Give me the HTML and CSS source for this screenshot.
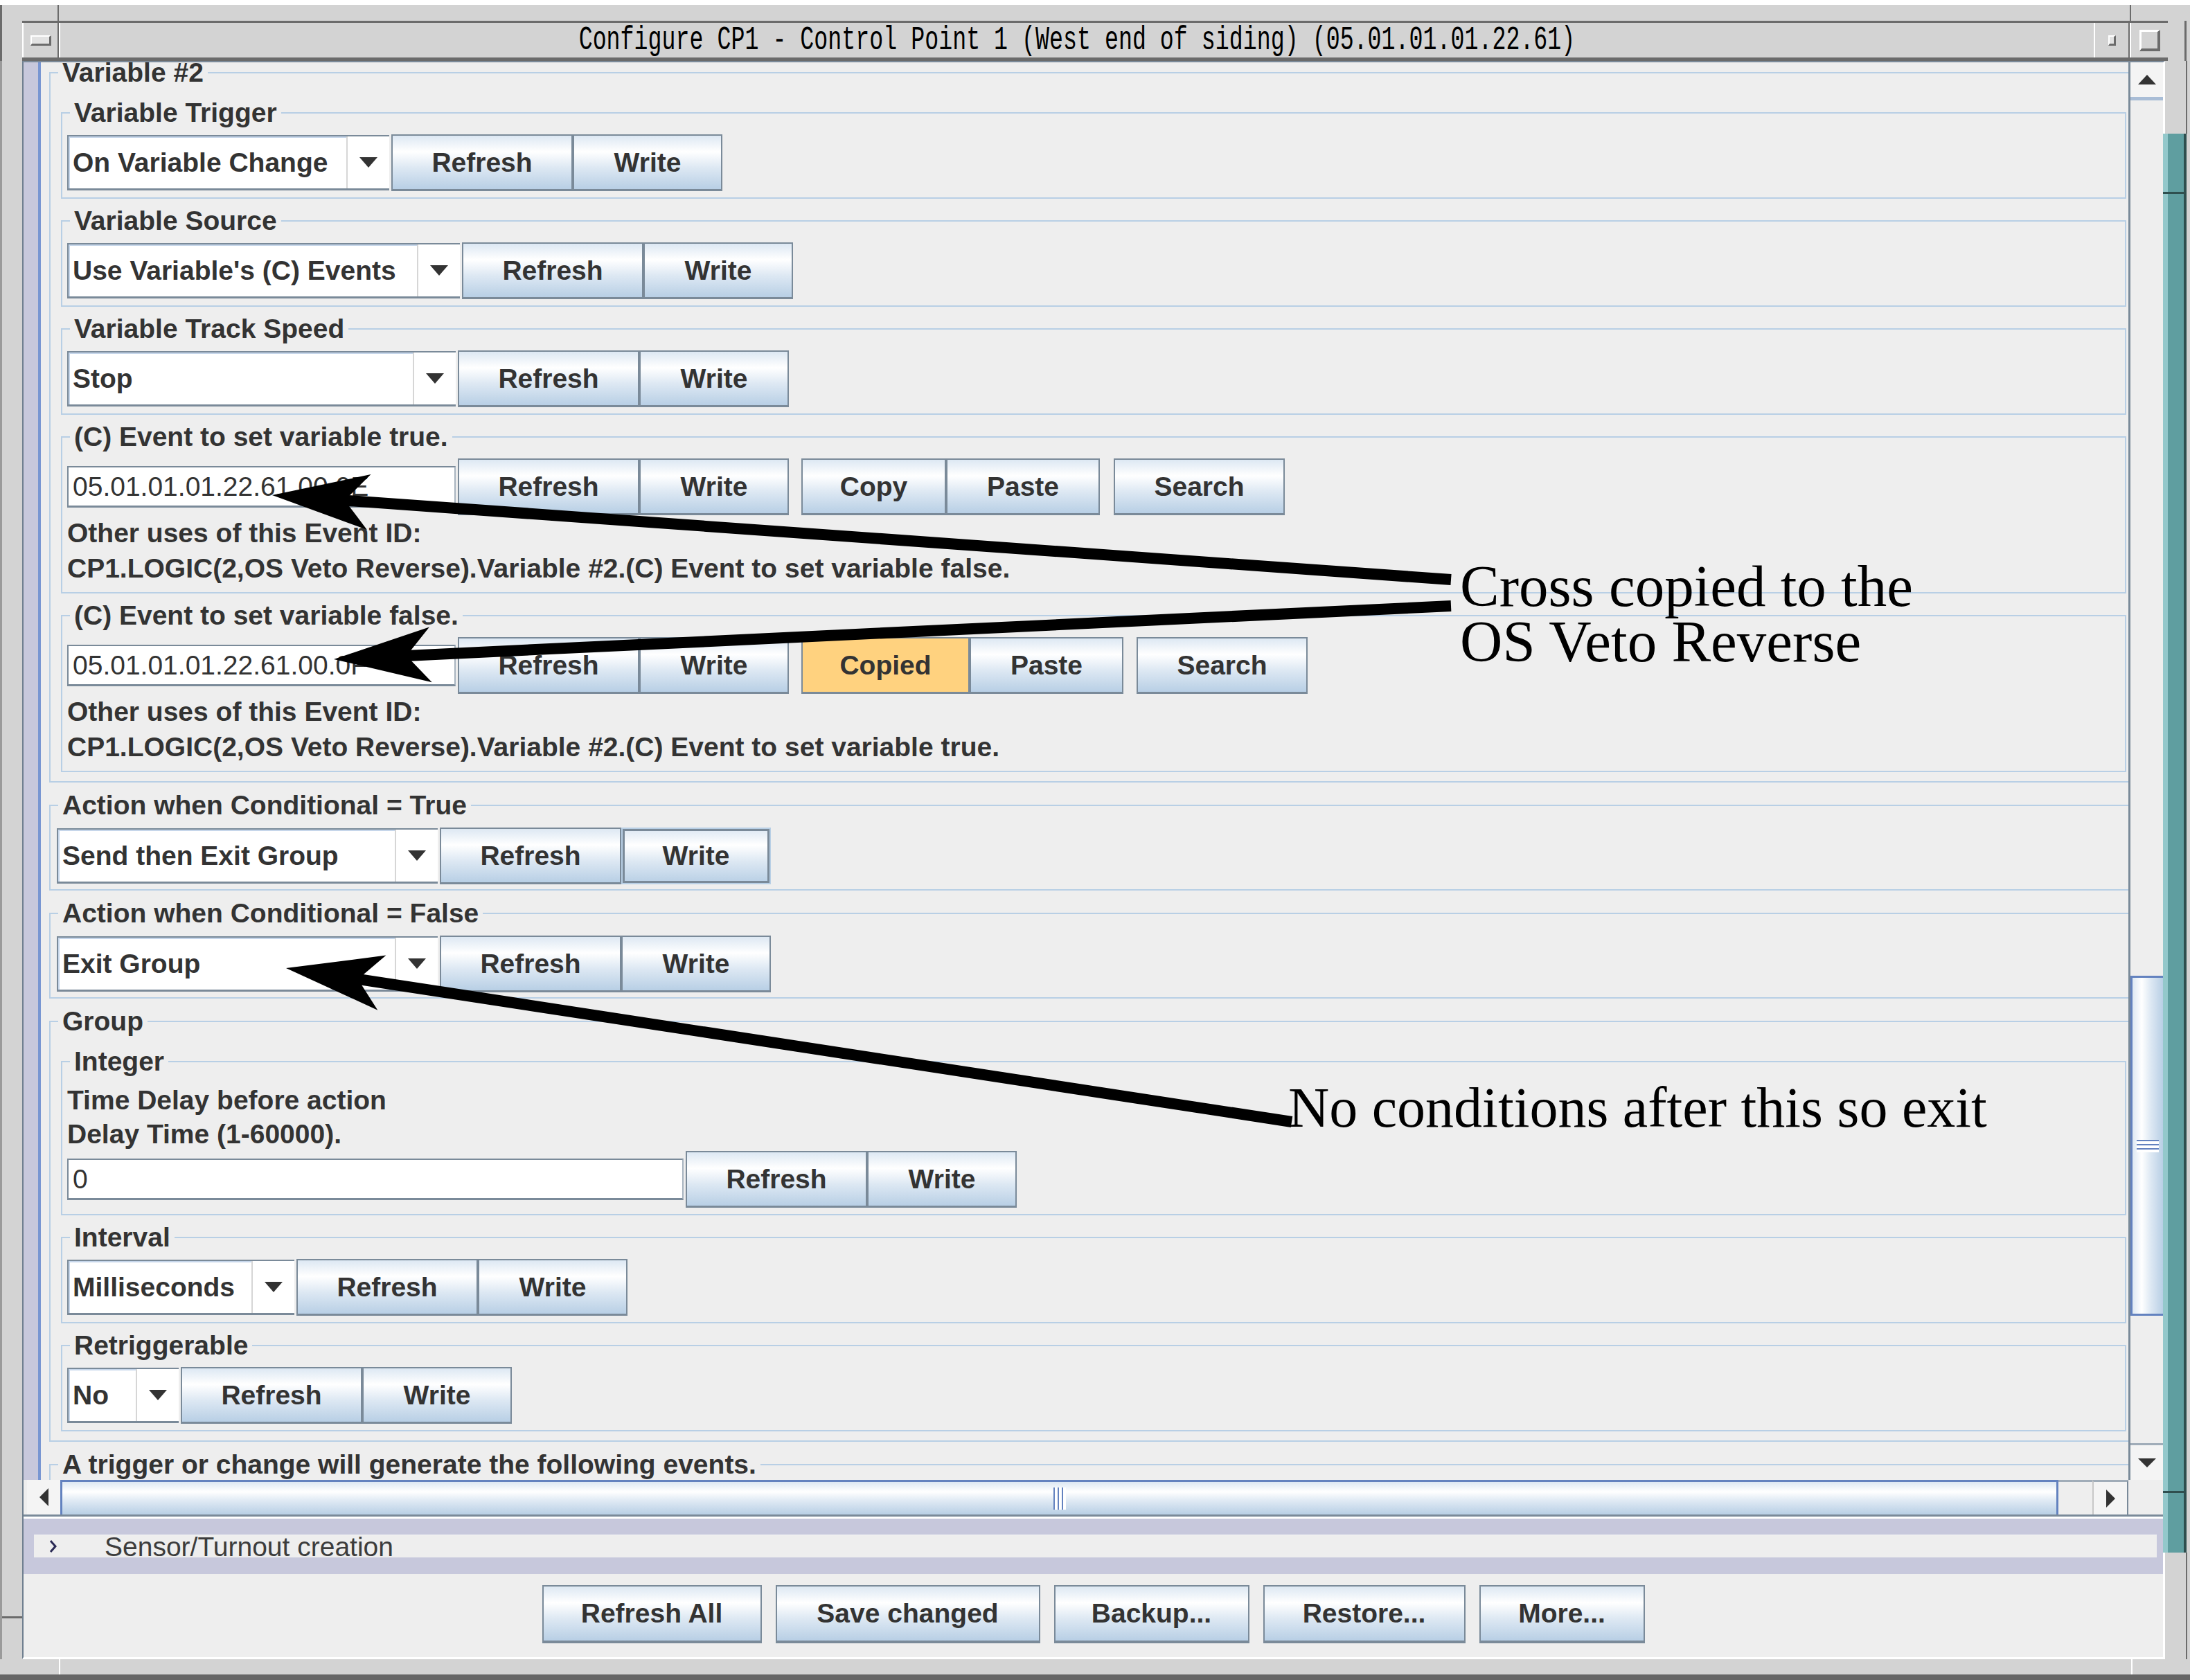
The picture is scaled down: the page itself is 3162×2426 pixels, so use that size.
FILE: index.html
```html
<!DOCTYPE html>
<html>
<head>
<meta charset="utf-8">
<title>Configure CP1</title>
<link rel="stylesheet" href="styles.css">
</head>
<body>
<div class="screen">
  <div class="wm-top">
    <div class="wm-top-left"></div>
    <div class="wm-top-mid"></div>
    <div class="wm-top-right"></div>
  </div>
  <div class="title-row">
    <div class="frame-l"></div>
    <div class="titlebar">
      <div class="tb-menu"><span class="tb-minus"></span></div>
      <div class="tb-title"><span class="tb-text">Configure CP1 - Control Point 1 (West end of siding) (05.01.01.01.22.61)</span></div>
      <div class="tb-iconify"><span class="tb-dot"></span></div>
      <div class="tb-max"><span class="tb-square"></span></div>
    </div>
    <div class="frame-r"></div>
  </div>
  <div class="main-row">
    <div class="frame-l2"><div class="frame-l2-top"></div></div>
    <div class="win">
      <div class="scrollpane">
        <div class="sp-row">
          <div class="viewport">
            <div class="vp-side"></div>
            <div class="vp-line"></div>
            <div class="vp-content">

              <fieldset class="tb outer first">
                <legend>Variable #2</legend>
                <div class="ob ob-first">
                  <fieldset class="tb inner">
                    <legend>Variable Trigger</legend>
                    <div class="ib">
                      <div class="row">
                        <div class="combo w-vt"><span class="combo-text">On Variable Change</span><span class="combo-arrow"><i class="tri"></i></span></div>
                        <div class="btn b-refresh">Refresh</div><div class="btn b-write">Write</div>
                      </div>
                    </div>
                  </fieldset>
                  <fieldset class="tb inner">
                    <legend>Variable Source</legend>
                    <div class="ib">
                      <div class="row">
                        <div class="combo w-vs"><span class="combo-text">Use Variable's (C) Events</span><span class="combo-arrow"><i class="tri"></i></span></div>
                        <div class="btn b-refresh">Refresh</div><div class="btn b-write">Write</div>
                      </div>
                    </div>
                  </fieldset>
                  <fieldset class="tb inner">
                    <legend>Variable Track Speed</legend>
                    <div class="ib">
                      <div class="row">
                        <div class="combo w-vts"><span class="combo-text">Stop</span><span class="combo-arrow"><i class="tri"></i></span></div>
                        <div class="btn b-refresh">Refresh</div><div class="btn b-write">Write</div>
                      </div>
                    </div>
                  </fieldset>
                  <fieldset class="tb inner">
                    <legend>(C) Event to set variable true.</legend>
                    <div class="ib">
                      <div class="row">
                        <div class="tfield w-ev">05.01.01.01.22.61.00.0E</div>
                        <div class="btn b-refresh">Refresh</div><div class="btn b-write">Write</div>
                        <div class="btn b-copy sep18">Copy</div><div class="btn b-paste">Paste</div>
                        <div class="btn b-search sep20">Search</div>
                      </div>
                      <div class="info">Other uses of this Event ID:</div>
                      <div class="info">CP1.LOGIC(2,OS Veto Reverse).Variable #2.(C) Event to set variable false.</div>
                    </div>
                  </fieldset>
                  <fieldset class="tb inner">
                    <legend>(C) Event to set variable false.</legend>
                    <div class="ib">
                      <div class="row">
                        <div class="tfield w-ev">05.01.01.01.22.61.00.0F</div>
                        <div class="btn b-refresh">Refresh</div><div class="btn b-write">Write</div>
                        <div class="btn b-copied sep18">Copied</div><div class="btn b-paste">Paste</div>
                        <div class="btn b-search sep19">Search</div>
                      </div>
                      <div class="info">Other uses of this Event ID:</div>
                      <div class="info">CP1.LOGIC(2,OS Veto Reverse).Variable #2.(C) Event to set variable true.</div>
                    </div>
                  </fieldset>
                </div>
              </fieldset>

              <fieldset class="tb outer">
                <legend>Action when Conditional = True</legend>
                <div class="ob-d">
                  <div class="row">
                    <div class="combo w-act"><span class="combo-text">Send then Exit Group</span><span class="combo-arrow"><i class="tri"></i></span></div>
                    <div class="btn b-refresh">Refresh</div><div class="btn b-write focus">Write</div>
                  </div>
                </div>
              </fieldset>

              <fieldset class="tb outer">
                <legend>Action when Conditional = False</legend>
                <div class="ob-d">
                  <div class="row">
                    <div class="combo w-act"><span class="combo-text">Exit Group</span><span class="combo-arrow"><i class="tri"></i></span></div>
                    <div class="btn b-refresh">Refresh</div><div class="btn b-write">Write</div>
                  </div>
                </div>
              </fieldset>

              <fieldset class="tb outer">
                <legend>Group</legend>
                <div class="ob">
                  <fieldset class="tb inner">
                    <legend>Integer</legend>
                    <div class="ib">
                      <div class="plain">Time Delay before action</div>
                      <div class="plain">Delay Time (1-60000).</div>
                      <div class="row">
                        <div class="tfield w-int">0</div>
                        <div class="btn b-refresh">Refresh</div><div class="btn b-write">Write</div>
                      </div>
                    </div>
                  </fieldset>
                  <fieldset class="tb inner">
                    <legend>Interval</legend>
                    <div class="ib">
                      <div class="row">
                        <div class="combo w-ms"><span class="combo-text">Milliseconds</span><span class="combo-arrow"><i class="tri"></i></span></div>
                        <div class="btn b-refresh">Refresh</div><div class="btn b-write">Write</div>
                      </div>
                    </div>
                  </fieldset>
                  <fieldset class="tb inner">
                    <legend>Retriggerable</legend>
                    <div class="ib">
                      <div class="row">
                        <div class="combo w-no"><span class="combo-text">No</span><span class="combo-arrow"><i class="tri"></i></span></div>
                        <div class="btn b-refresh">Refresh</div><div class="btn b-write">Write</div>
                      </div>
                    </div>
                  </fieldset>
                </div>
              </fieldset>

              <fieldset class="tb outer">
                <legend>A trigger or change will generate the following events.</legend>
                <div class="ob-rest"></div>
              </fieldset>

            </div>
          </div>
          <div class="vscroll">
            <div class="sb-up"><i class="tri-up"></i></div>
            <div class="vs-track1"></div>
            <div class="vs-thumb"><span class="vgrip"></span></div>
            <div class="vs-track2"></div>
            <div class="sb-down"><i class="tri-sm"></i></div>
          </div>
        </div>
        <div class="hscroll-row">
          <div class="hscroll">
            <div class="sb-left"><i class="tri-left"></i></div>
            <div class="hs-thumb"><span class="hgrip"></span></div>
            <div class="hs-track"></div>
            <div class="sb-right"><i class="tri-right"></i></div>
          </div>
          <div class="corner"></div>
        </div>
      </div>
      <div class="lav-band">
        <div class="collapse-row">
          <svg class="chev" width="12" height="20" viewBox="0 0 12 20"><polyline points="2,2 9,10 2,18" fill="none" stroke="#2a2a55" stroke-width="3"/></svg>
          <span class="collapse-text">Sensor/Turnout creation</span>
        </div>
      </div>
      <div class="bottom-buttons">
        <div class="btn bb b-all">Refresh All</div>
        <div class="btn bb b-save">Save changed</div>
        <div class="btn bb b-backup">Backup...</div>
        <div class="btn bb b-restore">Restore...</div>
        <div class="btn bb b-more">More...</div>
      </div>
    </div>
    <div class="frame-r2"></div>
  </div>
  <div class="wm-bottom">
    <div class="wm-bot-left"></div>
    <div class="wm-bot-mid"></div>
    <div class="wm-bot-right"></div>
  </div>

  <div class="teal"></div>

  <svg class="annot" width="3162" height="2426" viewBox="0 0 3162 2426">
    <line x1="492.7" y1="722.2" x2="2095" y2="837" stroke="#000" stroke-width="16"/>
    <polygon points="393,715 529.8,764.9 497.7,722.5 535.5,685.1" fill="#000"/>
    <line x1="581.9" y1="947.2" x2="2095" y2="875" stroke="#000" stroke-width="16"/>
    <polygon points="482,952 623.7,985.3 586.9,947 619.9,905.4" fill="#000"/>
    <line x1="511.9" y1="1413.1" x2="1865" y2="1620" stroke="#000" stroke-width="16"/>
    <polygon points="413,1398 545.3,1458.7 516.8,1413.9 557.4,1379.6" fill="#000"/>
  </svg>
  <div class="note note1a">Cross copied to the</div>
  <div class="note note1b">OS Veto Reverse</div>
  <div class="note note2">No conditions after this so exit</div>
</div>
</body>
</html>
```
FILE: styles.css
```css
* { box-sizing: border-box; }
html, body { margin: 0; padding: 0; }
body {
  width: 3162px;
  height: 2426px;
  overflow: hidden;
  background: #d3d3d3;
  font-family: "Liberation Sans", Arial, sans-serif;
}
.screen {
  position: relative;
  width: 3162px;
  height: 2426px;
  background: #d3d3d3;
  overflow: hidden;
}

/* ---------- window manager frame ---------- */
.wm-top { display: flex; height: 30px; border-top: 7px solid #fff; }
.wm-top-left { width: 85px; border-left: 3px solid #6b6b6b; border-right: 2px solid #6b6b6b; }
.wm-top-mid { flex: 1; }
.wm-top-right { width: 87px; border-left: 2px solid #6b6b6b; }

.title-row { display: flex; height: 58px; }
.frame-l { width: 32px; flex: none; border-left: 3px solid #6b6b6b; }
.titlebar {
  width: 3098px;
  flex: none;
  display: flex;
  background: #d3d3d3;
  border-top: 3px solid #6b6b6b;
  border-bottom: 5px solid #6b6b6b;
}
.tb-menu {
  width: 53px;
  flex: none;
  border-left: 2px solid #fff;
  border-right: 2px solid #6b6b6b;
  display: flex; align-items: center; justify-content: center;
}
.tb-minus {
  width: 30px; height: 15px;
  background: #e2e2e2;
  border-top: 2px solid #fff; border-left: 2px solid #fff;
  border-bottom: 3px solid #6b6b6b; border-right: 3px solid #6b6b6b;
}
.tb-title {
  flex: 1;
  min-width: 0;
  display: flex; align-items: center; justify-content: center;
  border-left: 2px solid #fff;
}
.tb-text {
  display: inline-block;
  font-family: "Liberation Mono", "DejaVu Sans Mono", monospace;
  font-size: 33.3px;
  line-height: 34px;
  color: #000;
  white-space: pre;
  transform: scaleY(1.45);
}
.tb-iconify {
  width: 52px;
  flex: none;
  border-left: 2px solid #fff;
  border-right: 2px solid #6b6b6b;
  display: flex; align-items: center; justify-content: center;
}
.tb-dot {
  width: 11px; height: 15px;
  background: #e2e2e2;
  border-top: 2px solid #fff; border-left: 2px solid #fff;
  border-right: 3px solid #6b6b6b; border-bottom: 3px solid #6b6b6b;
}
.tb-max {
  width: 55px;
  flex: none;
  border-left: 2px solid #fff;
  display: flex; align-items: center; justify-content: center;
}
.tb-square {
  width: 30px; height: 31px;
  background: #d3d3d3;
  border-top: 3px solid #fff; border-left: 3px solid #fff;
  border-right: 4px solid #6b6b6b; border-bottom: 4px solid #6b6b6b;
}
.frame-r { flex: 1; background: linear-gradient(to right, #d3d3d3 0 24px, #6b6b6b 24px 27px, #d3d3d3 27px); }

.main-row { display: flex; height: 2308px; }
.frame-l2 { width: 32px; flex: none; border-left: 3px solid #9a9a9a; }
.frame-l2-top { height: 2249px; border-bottom: 3px solid #6b6b6b; }
.frame-r2 {
  flex: 1;
  background: linear-gradient(to right, #d3d3d3 0 30px, #6b6b6b 30px 32px, #d3d3d3 32px);
}
.wm-bottom { display: flex; height: 30px; border-bottom: 8px solid #666; }
.wm-bot-left { width: 87px; border-right: 2px solid #fff; }
.wm-bot-mid { flex: 1; }
.wm-bot-right { width: 85px; border-left: 2px solid #fff; }

.teal {
  position: absolute;
  left: 3123px; top: 193px;
  width: 39px; height: 2049px;
  background: linear-gradient(to right, #93c8cb 0 7px, #5f9ea0 7px 30px, #2f4f4f 30px 34px, #d3d3d3 34px);
}
.teal::before, .teal::after {
  content: "";
  position: absolute;
  left: 0; width: 34px; height: 3px;
  background: #2f4f4f;
}
.teal::before { top: 84px; }
.teal::after { top: 1960px; }

/* ---------- window ---------- */
.win {
  width: 3094px;
  flex: none;
  display: flex;
  flex-direction: column;
  background: #eeeeee;
  border-top: 2px solid #7b8a99;
  border-left: 2px solid #6f7f8f;
  border-right: 3px solid #fff;
  border-bottom: 3px solid #fff;
}
.scrollpane { border-bottom: 3px solid #fff; }
.sp-row { display: flex; height: 2047px; }
.viewport {
  width: 3039px;
  height: 2047px;
  overflow: hidden;
  display: flex;
  background: #eeeeee;
}
.vp-side { flex: none; width: 21px; background: #c7c8dc; }
.vp-line { flex: none; width: 4px; background: #7896d2; }
.vp-content {
  flex: none;
  width: 3040px;
  padding-left: 12px;
  display: flex;
  flex-direction: column;
  gap: 10px;
}

/* titled borders */
.tb {
  border: 2px solid #b8cfe5;
  margin: 0;
  padding: 0;
  min-width: 0;
}
.tb > legend {
  margin-left: 11px;
  padding: 0 6px;
  font-weight: bold;
  font-size: 39px;
  line-height: 46px;
  color: #333;
  white-space: nowrap;
}
.tb.first > legend { line-height: 30px; }
.outer { width: 3016px; flex: none; }
.inner { margin: 0 6px; }
.ob { padding: 12px 9px 13px; display: flex; flex-direction: column; gap: 9px; }
.ob.ob-first { padding-top: 20px; }
.ob-d { padding: 9px 9px 7px; }
.ob-rest { height: 300px; }
.ib { padding: 8px 7px 9px; }

.row { display: flex; align-items: center; height: 82px; }
.info {
  font-weight: bold; font-size: 39px; line-height: 51px;
  color: #333; white-space: nowrap;
}
.plain {
  font-weight: bold; font-size: 39px; line-height: 49px;
  color: #333; white-space: nowrap;
}

/* combo */
.combo {
  flex: none;
  display: flex;
  height: 80px;
  margin-right: 3px;
  background: #fff;
  border: 2px solid #7a8a99;
  border-right: 0;
  border-bottom-width: 3px;
}
.combo-text {
  flex: 1;
  display: flex; align-items: center;
  padding-left: 6px;
  font-weight: bold; font-size: 39px;
  color: #333;
  white-space: nowrap; overflow: hidden;
  box-shadow: inset 2px 2px 0 #c6d6ea;
}
.combo-arrow {
  flex: none;
  width: 62px;
  display: flex; align-items: center; justify-content: center;
  border-left: 2px solid #d6d6d6;
}
.tri {
  width: 0; height: 0;
  border-left: 13px solid transparent;
  border-right: 13px solid transparent;
  border-top: 15px solid #333;
}
.w-vt { width: 465px; }
.w-vs { width: 567px; }
.w-vts { width: 561px; }
.w-act { width: 550px; }
.w-ms { width: 328px; }
.w-no { width: 161px; }

/* text field */
.tfield {
  flex: none;
  height: 60px;
  margin-right: 3px;
  display: flex; align-items: center;
  padding-left: 6px;
  background: #fff;
  border: 2px solid #7a8a99;
  border-right-color: #a8b4c0;
  border-bottom-width: 3px;
  font-size: 39px;
  color: #333;
  white-space: nowrap; overflow: hidden;
}
.w-ev { width: 561px; }
.w-int { width: 890px; }

/* buttons */
.btn {
  flex: none;
  height: 82px;
  display: flex; align-items: center; justify-content: center;
  border: 2px solid #7a8a99;
  border-bottom-width: 3px;
  background: linear-gradient(to bottom, #dde8f3 0%, #ffffff 30%, #dde8f3 60%, #b8cfe5 100%);
  font-weight: bold; font-size: 39px;
  color: #333;
  white-space: nowrap;
}
.b-refresh { width: 262px; }
.b-write { width: 216px; }
.b-copy { width: 209px; }
.b-paste { width: 222px; }
.b-search { width: 247px; }
.b-copied { width: 243px; background: #ffd27f; }
.sep18 { margin-left: 18px; }
.sep19 { margin-left: 19px; }
.sep20 { margin-left: 20px; }
.btn.focus {
  border: 2px solid #b8cfe5;
  box-shadow: inset 0 0 0 3px #7a8a99;
}

/* vertical scrollbar */
.vscroll {
  width: 50px;
  flex: none;
  display: flex; flex-direction: column;
  border-left: 3px solid #7a8a99;
  background: #eeeeee;
}
.sb-up {
  height: 55px;
  flex: none;
  display: flex; align-items: center; justify-content: center;
  background: #f4f4f4;
  border-bottom: 5px solid #a9bdd6;
}
.tri-up {
  width: 0; height: 0;
  border-left: 13px solid transparent;
  border-right: 13px solid transparent;
  border-bottom: 14px solid #333;
}
.vs-track1 { height: 1264px; flex: none; }
.vs-thumb {
  height: 491px;
  flex: none;
  display: flex; align-items: center; justify-content: center;
  border-top: 3px solid #6382bf;
  border-bottom: 3px solid #6382bf;
  border-left: 3px solid #6382bf;
  background: linear-gradient(to right, #dde8f3 0%, #ffffff 30%, #dde8f3 60%, #b8cfe5 100%);
}
.vgrip {
  width: 32px; height: 18px;
  background: repeating-linear-gradient(to bottom, #6382bf 0 2px, #ffffff 2px 6px);
}
.vs-track2 { height: 184px; flex: none; }
.sb-down {
  height: 53px;
  flex: none;
  display: flex; align-items: center; justify-content: center;
  background: #f4f4f4;
  border-top: 3px solid #a0acb8;
}
.tri-sm {
  width: 0; height: 0;
  border-left: 13px solid transparent;
  border-right: 13px solid transparent;
  border-top: 13px solid #333;
}

/* horizontal scrollbar */
.hscroll-row { display: flex; height: 53px; border-bottom: 3px solid #7a8a99; }
.hscroll { width: 3039px; flex: none; display: flex; }
.sb-left {
  width: 53px;
  flex: none;
  display: flex; align-items: center; justify-content: center;
  background: #f4f4f4;
  border-left: 5px solid #eeeeee;
}
.tri-left {
  width: 0; height: 0;
  border-top: 13px solid transparent;
  border-bottom: 13px solid transparent;
  border-right: 13px solid #333;
}
.hs-thumb {
  width: 2885px;
  flex: none;
  display: flex; align-items: center; justify-content: center;
  border-top: 3px solid #6382bf;
  border-left: 3px solid #6382bf;
  border-right: 3px solid #6382bf;
  background: linear-gradient(to bottom, #dde8f3 0%, #ffffff 30%, #dde8f3 60%, #b8cfe5 100%);
}
.hgrip {
  width: 18px; height: 32px;
  background: repeating-linear-gradient(to right, #6382bf 0 2px, #ffffff 2px 6px);
}
.hs-track { width: 49px; flex: none; background: #eeeeee; border-top: 3px solid #a0acb8; }
.sb-right {
  width: 52px;
  flex: none;
  display: flex; align-items: center; justify-content: center;
  background: #f4f4f4;
  border-top: 3px solid #a0acb8;
  border-left: 2px solid #c8c8c8;
  border-right: 2px solid #7a8a99;
}
.tri-right {
  width: 0; height: 0;
  border-top: 13px solid transparent;
  border-bottom: 13px solid transparent;
  border-left: 13px solid #333;
}
.corner { flex: 1; background: #eeeeee; }

/* lavender collapsible band */
.lav-band {
  height: 80px;
  padding: 23px 9px 24px 15px;
  background: #c7c8dc;
}
.collapse-row {
  height: 33px;
  display: flex; align-items: center;
  background: #eeeeee;
  border-top: 1px solid #f6f6f6;
}
.chev { margin-left: 22px; flex: none; }
.collapse-text {
  margin-left: 68px;
  font-size: 39px;
  color: #3c3c3c;
  white-space: nowrap;
  line-height: 33px;
}

/* bottom buttons */
.bottom-buttons {
  height: 120px;
  padding-top: 16px;
  display: flex;
  justify-content: center;
  align-items: flex-start;
  gap: 20px;
}
.bb { height: 84px; border-bottom-width: 4px; }
.b-all { width: 317px; }
.b-save { width: 382px; }
.b-backup { width: 282px; }
.b-restore { width: 292px; }
.b-more { width: 239px; }

/* annotation overlay */
.annot {
  position: absolute;
  left: 0; top: 0;
  pointer-events: none;
}
.note {
  position: absolute;
  font-family: "Liberation Serif", "Times New Roman", serif;
  color: #000;
  line-height: 80px;
  height: 80px;
  white-space: nowrap;
}
.note1a { left: 2108px; top: 806px; font-size: 85px; }
.note1b { left: 2108px; top: 886px; font-size: 85px; }
.note2 { left: 1860px; top: 1560px; font-size: 82px; }
```
